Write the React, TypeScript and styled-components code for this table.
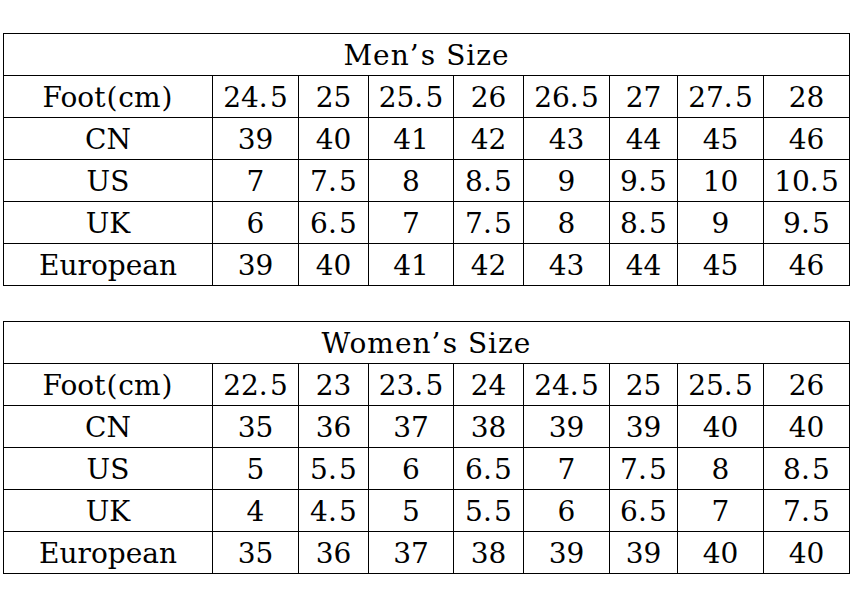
import React from "react";
import styled, { createGlobalStyle } from "styled-components";

const GlobalStyle = createGlobalStyle`
  html, body {
    margin: 0;
    padding: 0;
    background: #ffffff;
  }
  body {
    font-family: "DejaVu Serif", serif;
    color: #000000;
  }
`;

const FONT = `"DejaVu Serif", serif`;
const COLS = [209, 86, 70, 85, 70, 86, 68, 86, 86];

const S = {
  Page: styled.div`
    display: flex;
    flex-direction: column;
    gap: 35px;
    padding: 33px 0 0 3px;
  `,
  Table: styled.table`
    border-collapse: collapse;
    table-layout: fixed;
    width: 847px;
    font-family: ${FONT};
    color: #000;
  `,
  Row: styled.tr`
    height: 42px;
  `,
  Title: styled.th`
    border: 1px solid #000;
    padding: 2px 0 0 0;
    font-family: ${FONT};
    font-weight: 400;
    font-size: 28px;
    letter-spacing: 1px;
    text-align: center;
    vertical-align: middle;
  `,
  Cell: styled.td`
    border: 1px solid #000;
    padding: 1px 0 0 0;
    font-family: ${FONT};
    font-size: 28px;
    text-align: center;
    vertical-align: middle;
    white-space: nowrap;
  `,
  // half-width slot for narrow punctuation, like the CJK font in the original
  Punct: styled.span<{ $center?: boolean }>`
    display: inline-block;
    width: ${(p) => (p.$center ? "0.46em" : "0.4em")};
    text-align: ${(p) => (p.$center ? "center" : "left")};
  `,
};

const Txt = ({ value }: { value: string }) => {
  const parts = value.split(/([.’()])/);
  return (
    <>
      {parts.map((p, i) => {
        if (p === "." || p === "’") return <S.Punct key={i}>{p}</S.Punct>;
        if (p === "(" || p === ")")
          return (
            <S.Punct key={i} $center>
              {p}
            </S.Punct>
          );
        return <React.Fragment key={i}>{p}</React.Fragment>;
      })}
    </>
  );
};

type SizeTable = {
  title: string;
  rows: [string, string[]][];
};

const men: SizeTable = {
  title: "Men’s Size",
  rows: [
    ["Foot(cm)", ["24.5", "25", "25.5", "26", "26.5", "27", "27.5", "28"]],
    ["CN", ["39", "40", "41", "42", "43", "44", "45", "46"]],
    ["US", ["7", "7.5", "8", "8.5", "9", "9.5", "10", "10.5"]],
    ["UK", ["6", "6.5", "7", "7.5", "8", "8.5", "9", "9.5"]],
    ["European", ["39", "40", "41", "42", "43", "44", "45", "46"]],
  ],
};

const women: SizeTable = {
  title: "Women’s Size",
  rows: [
    ["Foot(cm)", ["22.5", "23", "23.5", "24", "24.5", "25", "25.5", "26"]],
    ["CN", ["35", "36", "37", "38", "39", "39", "40", "40"]],
    ["US", ["5", "5.5", "6", "6.5", "7", "7.5", "8", "8.5"]],
    ["UK", ["4", "4.5", "5", "5.5", "6", "6.5", "7", "7.5"]],
    ["European", ["35", "36", "37", "38", "39", "39", "40", "40"]],
  ],
};

const SizeChart = ({ data }: { data: SizeTable }) => (
  <S.Table>
    <colgroup>
      {COLS.map((w, i) => (
        <col key={i} style={{ width: w }} />
      ))}
    </colgroup>
    <thead>
      <S.Row>
        <S.Title colSpan={9}>
          <Txt value={data.title} />
        </S.Title>
      </S.Row>
    </thead>
    <tbody>
      {data.rows.map(([label, vals]) => (
        <S.Row key={label}>
          <S.Cell>
            <Txt value={label} />
          </S.Cell>
          {vals.map((v, i) => (
            <S.Cell key={i}>
              <Txt value={v} />
            </S.Cell>
          ))}
        </S.Row>
      ))}
    </tbody>
  </S.Table>
);

export default function App() {
  return (
    <>
      <GlobalStyle />
      <S.Page>
        <SizeChart data={men} />
        <SizeChart data={women} />
      </S.Page>
    </>
  );
}
